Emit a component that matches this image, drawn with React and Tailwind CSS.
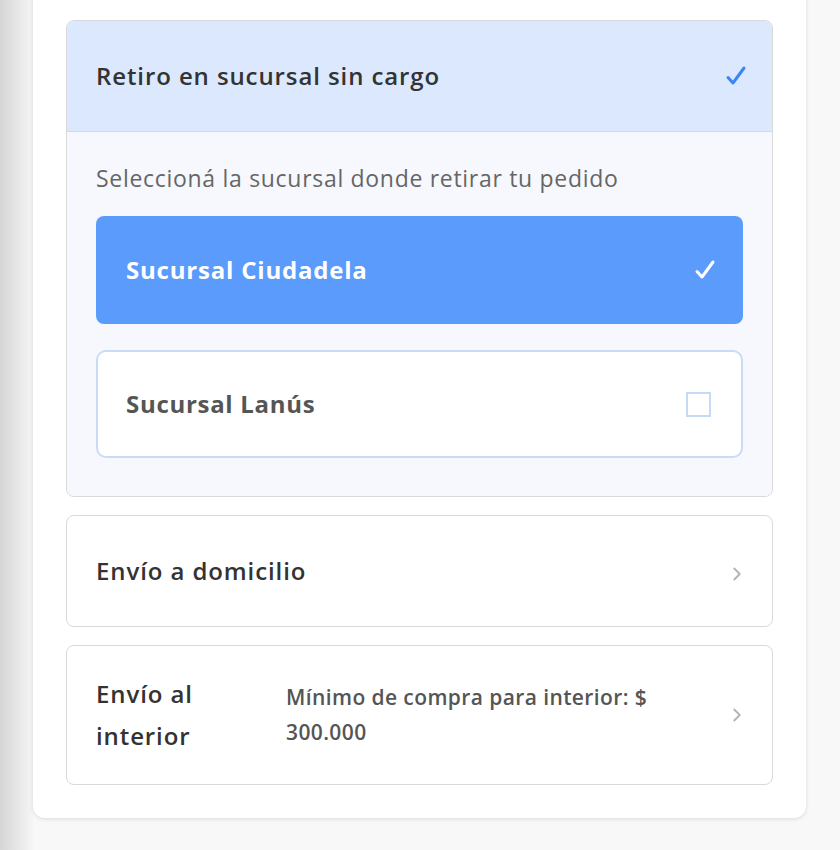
import { ChevronRight } from 'lucide-react';

const FONT = { fontFamily: '"Open Sans", "Noto Sans", sans-serif' };

function Check({ className }) {
  return (
    <svg viewBox="0 0 24 24" className={className} fill="none" stroke="currentColor" strokeWidth="3" strokeLinecap="round" strokeLinejoin="round">
      <path d="M4 13.5l5 5.5L20 4" />
    </svg>
  );
}

const TITLE = 'text-[24px] font-semibold tracking-[0.9px] text-[#333]';

export default function App() {
  return (
    <div className="flex min-h-[850px] w-[840px] bg-[#f8f8f8]" style={FONT}>
      {/* left shadow strip */}
      <div className="w-[33px] shrink-0 bg-gradient-to-r from-[#d5d5d5] to-[#f6f6f6]" />

      <div className="flex w-[773px] flex-col">
        <div className="-mt-[12px] rounded-[12px] bg-white px-[33px] pb-[33px] pt-[32px] shadow-[0_1px_4px_rgba(0,0,0,0.12)]">
          <div className="flex flex-col gap-[18px]">
            {/* Retiro en sucursal */}
            <div className="overflow-hidden rounded-[8px] border border-[#d9d9d9]">
              <div className="flex h-[111px] items-center justify-between border-b border-[#d9d9d9] bg-[#dce8fd] pl-[29px] pr-[24px]">
                <span className={TITLE}>Retiro en sucursal sin cargo</span>
                <Check className="h-[24px] w-[24px] text-[#3c86f5]" />
              </div>
              <div className="flex flex-col bg-[#f6f8fd] px-[29px] pb-[38px] pt-[31px]">
                <p className="text-[23px] leading-[30px] tracking-[0.7px] text-[#666]">Seleccioná la sucursal donde retirar tu pedido</p>
                <div className="mt-[23px] flex h-[108px] items-center justify-between rounded-[8px] bg-[#5a9bfb] pl-[30px] pr-[26px]">
                  <span className="text-[24px] font-bold tracking-[0.8px] text-white">Sucursal Ciudadela</span>
                  <Check className="h-[24px] w-[24px] text-white" />
                </div>
                <div className="mt-[26px] flex h-[108px] items-center justify-between rounded-[10px] border-2 border-[#c9dbf7] bg-white pl-[28px] pr-[30px]">
                  <span className="text-[24px] font-bold tracking-[0.7px] text-[#555]">Sucursal Lanús</span>
                  <span className="h-[25px] w-[25px] border-2 border-[#c6d9f6]" />
                </div>
              </div>
            </div>

            {/* Envío a domicilio */}
            <div className="flex h-[112px] items-center justify-between rounded-[8px] border border-[#d9d9d9] bg-white pl-[29px] pr-[24px]">
              <span className={TITLE}>Envío a domicilio</span>
              <ChevronRight className="mt-[6px] h-[22px] w-[22px] text-[#b3b3b3]" strokeWidth={2} />
            </div>

            {/* Envío al interior */}
            <div className="flex h-[140px] items-center rounded-[8px] border border-[#d9d9d9] bg-white pl-[29px] pr-[24px]">
              <span className={`mr-[30px] w-[160px] shrink-0 leading-[42px] ${TITLE}`}>Envío al interior</span>
              <span className="w-[390px] text-[21px] font-semibold leading-[35px] tracking-[0.4px] text-[#555]">Mínimo de compra para interior: $ 300.000</span>
              <ChevronRight className="ml-auto h-[22px] w-[22px] text-[#b3b3b3]" strokeWidth={2} />
            </div>
          </div>
        </div>
      </div>
    </div>
  );
}
